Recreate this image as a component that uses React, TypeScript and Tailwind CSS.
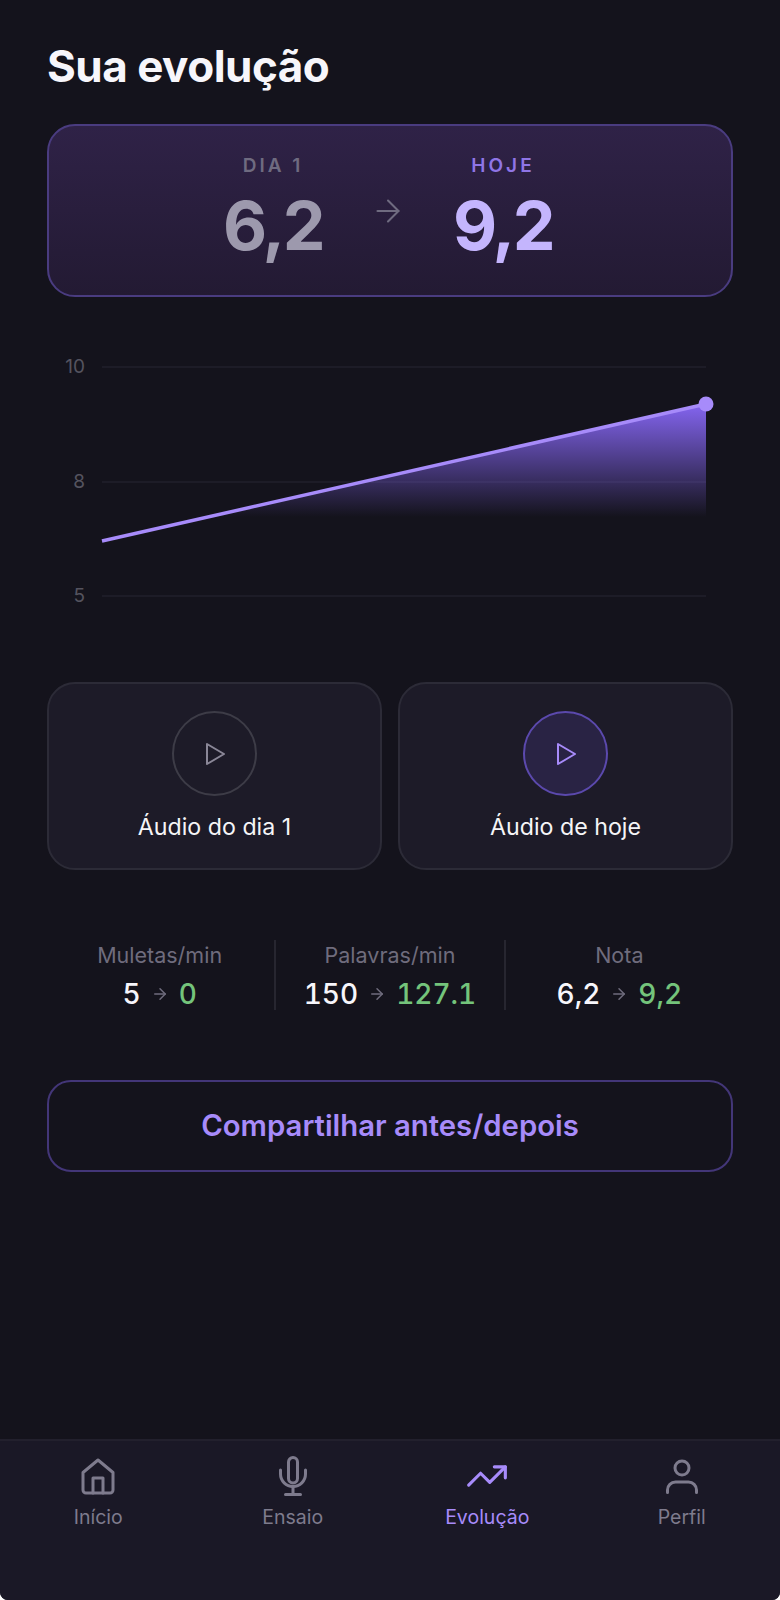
import React from 'react';
import { TrendingUp, ArrowRight } from 'lucide-react';

const FONT = "font-['Inter',sans-serif]";

const stats = [
  { label: 'Muletas/min', before: '5', after: '0' },
  { label: 'Palavras/min', before: '150', after: '127.1' },
  { label: 'Nota', before: '6,2', after: '9,2' },
];

const NavIcon = ({ children }: { children: React.ReactNode }) => (
  <svg width="44" height="44" viewBox="0 0 44 44" fill="none" stroke="currentColor" strokeWidth="3" strokeLinecap="round" strokeLinejoin="round">
    {children}
  </svg>
);

const HomeIcon = () => (
  <NavIcon>
    <path d="M7 18.5 22 6l15 12.5V36a3 3 0 0 1-3 3H10a3 3 0 0 1-3-3Z" />
    <path d="M17 39V24h10v15" />
  </NavIcon>
);

const MicIcon = () => (
  <NavIcon>
    <rect x="17.5" y="3.5" width="9" height="25.5" rx="4.5" />
    <path d="M9.5 16v4a12.5 12.5 0 0 0 25 0v-4" />
    <path d="M22 33v7M14.5 40.5h15" />
  </NavIcon>
);

const UserIcon = () => (
  <NavIcon>
    <circle cx="22" cy="14" r="7" />
    <path d="M7.5 38.5V36a8 8 0 0 1 8-8h13a8 8 0 0 1 8 8v2.5" />
  </NavIcon>
);

const tabs = [
  { label: 'Início', icon: <HomeIcon />, active: false },
  { label: 'Ensaio', icon: <MicIcon />, active: false },
  { label: 'Evolução', icon: <TrendingUp size={44} strokeWidth={1.7} />, active: true },
  { label: 'Perfil', icon: <UserIcon />, active: false },
];

const Chart = () => (
  <svg viewBox="0 0 780 285" className="block w-[780px] h-[285px]">
    <defs>
      <linearGradient id="area" x1="0" y1="0" x2="0" y2="1">
        <stop offset="0%" stopColor="#8465f0" />
        <stop offset="100%" stopColor="#8465f0" stopOpacity="0" />
      </linearGradient>
    </defs>
    {[37, 152, 266].map(y => (
      <line key={y} x1="102" x2="706" y1={y} y2={y} stroke="#21202b" strokeWidth="1.5" />
    ))}
    <polygon points="208,187 706,74 706,187" fill="url(#area)" />
    <line x1="102" y1="211" x2="706" y2="74" stroke="#a78bfa" strokeWidth="3.5" />
    <circle cx="706" cy="74" r="7.5" fill="#a78bfa" />
    <g fill="#55535f" fontSize="19" textAnchor="end">
      <text x="85" y="43">10</text>
      <text x="85" y="158">8</text>
      <text x="85" y="272">5</text>
    </g>
  </svg>
);

const PlayIcon = ({ className }: { className: string }) => (
  <svg width="24" height="24" viewBox="0 0 24 24" fill="none" stroke="currentColor" strokeWidth="2" strokeLinejoin="round" className={className}>
    <path d="M4 2 21 12 4 22Z" />
  </svg>
);

const AudioCard = ({ label, active }: { label: string; active?: boolean }) => (
  <div className="h-[188px] rounded-[28px] border-2 border-[#2c2b37] bg-[#1d1b28] flex flex-col items-center pt-[27px]">
    <div className={`w-[85px] h-[85px] rounded-full border-2 flex items-center justify-center ${active ? 'border-[#5b49ad] bg-[#292344]' : 'border-[#3d3c47]'}`}>
      <PlayIcon className={active ? 'text-[#a78bfa]' : 'text-[#8a8797]'} />
    </div>
    <span className="mt-[16px] text-[23.2px] leading-[30px] text-[#f5f5f7]">{label}</span>
  </div>
);

export default function App() {
  return (
    <div className={`${FONT} w-[780px] h-[1600px] bg-[#14131c] rounded-b-[8px] flex flex-col overflow-hidden`}>
      <div className="flex-1 px-[47px] pt-[38px]">
        <h1 className="text-[44px] leading-[56px] font-bold text-[#f7f6fb] tracking-[-0.5px]">Sua evolução</h1>

        {/* Score card */}
        <div className="mt-[30px] h-[173px] rounded-[28px] border-2 border-[#4a3c80] bg-gradient-to-b from-[#2f2247] to-[#231a33] flex justify-center items-start pt-[28px] pr-[4px]">
          <div className="w-[130px] flex flex-col items-center">
            <span className="text-[19px] leading-[24px] font-semibold tracking-[3px] text-[#6f6b80]">DIA 1</span>
            <span className="mt-[7px] text-[68px] leading-[80px] font-bold text-[#9d99ad] tracking-[-2.5px]">6,2</span>
          </div>
          <ArrowRight size={36} strokeWidth={1.4} className="mt-[39px] mx-[32px] text-[#6f6b80]" />
          <div className="w-[130px] flex flex-col items-center">
            <span className="text-[19px] leading-[24px] font-semibold tracking-[3px] text-[#8f75e6]">HOJE</span>
            <span className="mt-[7px] text-[68px] leading-[80px] font-bold text-[#c4b5fd] tracking-[-2.5px]">9,2</span>
          </div>
        </div>

        <div className="-mx-[47px] mt-[33px]">
          <Chart />
        </div>

        {/* Audio cards */}
        <div className="mt-[67px] grid grid-cols-2 gap-[16px]">
          <AudioCard label="Áudio do dia 1" />
          <AudioCard label="Áudio de hoje" active />
        </div>

        {/* Stats */}
        <div className="mt-[70px] -ml-[2px] grid grid-cols-3">
          {stats.map((s, i) => (
            <div key={s.label} className={`h-[70px] flex flex-col items-center ${i > 0 ? 'border-l-2 border-[#272630]' : ''}`}>
              <span className="text-[21.5px] leading-[30px] text-[#6f6c7d]">{s.label}</span>
              <div className="mt-[8px] flex items-center gap-[10px] text-[28px] leading-[32px] font-medium tabular-nums">
                <span className="text-[#f7f6fb]">{s.before}</span>
                <ArrowRight size={18} className="text-[#6f6c7d]" />
                <span className="text-[#74c47b]">{s.after}</span>
              </div>
            </div>
          ))}
        </div>

        <button className="mt-[70px] w-full h-[92px] rounded-[24px] border-2 border-[#433678] text-[29.3px] font-semibold text-[#a78bfa]">
          Compartilhar antes/depois
        </button>
      </div>

      {/* Bottom nav */}
      <nav className="h-[161px] border-t-2 border-[#22202d] bg-[#1a1826] grid grid-cols-4 px-[1px] pt-[13px]">
        {tabs.map(t => (
          <div key={t.label} className={`flex flex-col items-center ${t.active ? 'text-[#a78bfa]' : 'text-[#7e7b8d]'}`}>
            {t.icon}
            <span className="mt-[5px] text-[19.5px] leading-[28px]">{t.label}</span>
          </div>
        ))}
      </nav>
    </div>
  );
}
